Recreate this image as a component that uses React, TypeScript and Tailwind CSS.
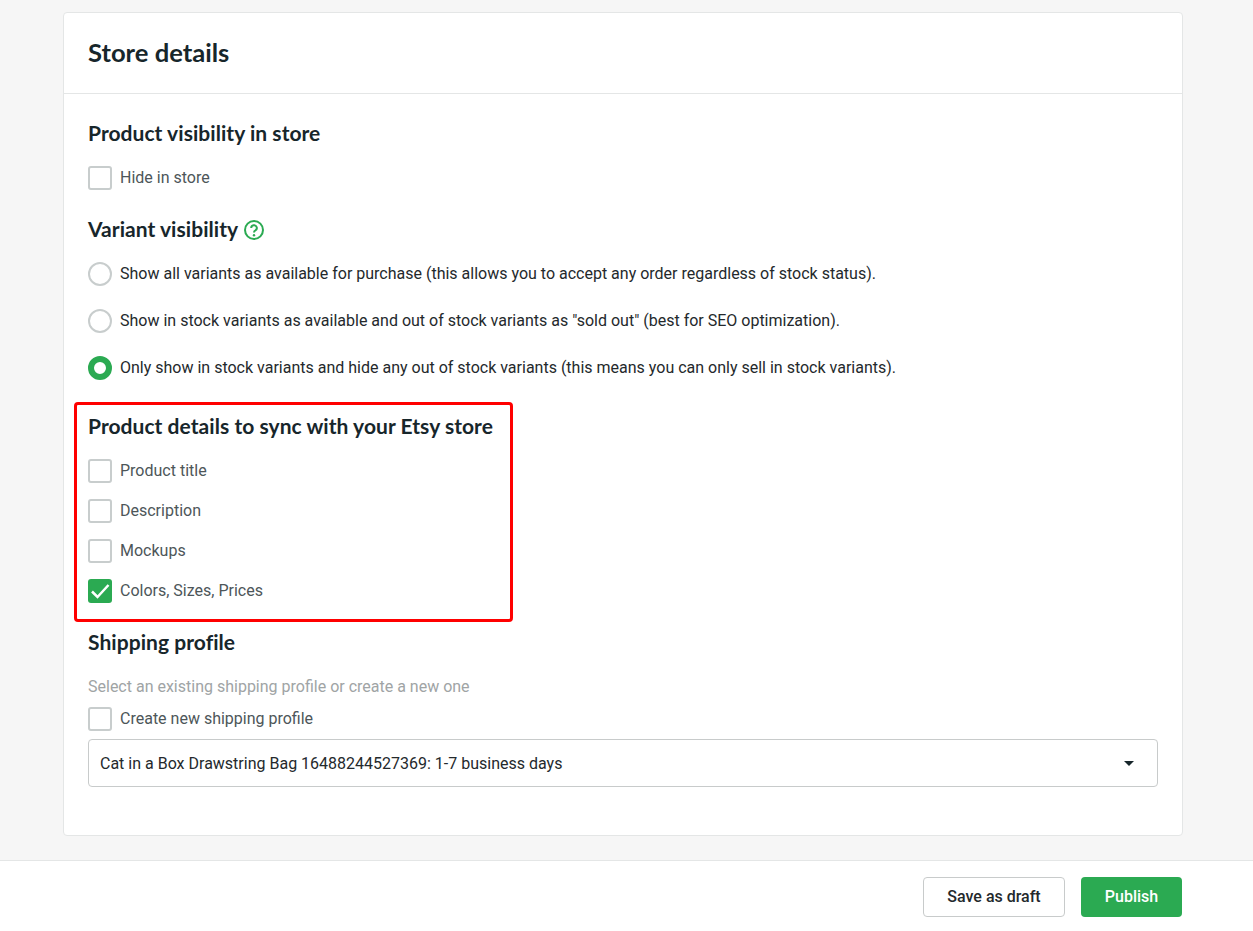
import { ReactNode } from "react";

const headingFont = "font-['Lato',sans-serif] font-bold text-[#17262b]";

function Checkbox({ label, checked }: { label: string; checked?: boolean }) {
  return (
    <label className="flex h-6 items-center gap-2">
      {checked ? (
        <span className="flex h-6 w-6 items-center justify-center rounded-[3px] bg-[#2baa52]">
          <svg width="24" height="24" viewBox="0 0 24 24" fill="none">
            <path d="M4 12.5 L9.5 18 L20.5 6" stroke="#fff" strokeWidth="2.5" />
          </svg>
        </span>
      ) : (
        <span className="h-6 w-6 rounded-[3px] border-2 border-[#c8cdcd] bg-white" />
      )}
      <span className="text-base text-[#4d5659]">{label}</span>
    </label>
  );
}

function Radio({ label, checked }: { label: string; checked?: boolean }) {
  return (
    <label className="flex h-6 items-center gap-2">
      {checked ? (
        <span className="h-6 w-6 rounded-full border-[6px] border-[#2baa52] bg-white" />
      ) : (
        <span className="h-6 w-6 rounded-full border-2 border-[#c8cdcd] bg-white" />
      )}
      <span className="text-base text-[#24292c]">{label}</span>
    </label>
  );
}

function SectionTitle({ children }: { children: ReactNode }) {
  return <h3 className={`${headingFont} text-[21px] leading-6 tracking-[0.05px]`}>{children}</h3>;
}

export default function App() {
  return (
    <div className="flex h-[931px] flex-col overflow-hidden bg-[#f6f6f6] font-['Roboto',sans-serif]">
      <div className="flex-1 px-[63px] pt-3">
        <div className="h-[824px] w-[1120px] rounded border border-[#e4e6e6] bg-white">
          <div className="flex h-[81px] items-center border-b border-[#e4e6e6] px-6 pb-[2px]">
            <h2 className={`${headingFont} text-[25.6px]`}>Store details</h2>
          </div>
          <div className="px-6 pt-[27px]">
            <SectionTitle>Product visibility in store</SectionTitle>
            <div className="mt-[21px]">
              <Checkbox label="Hide in store" />
            </div>
            <div className="mt-[27px] flex items-center gap-1.5">
              <SectionTitle>Variant visibility</SectionTitle>
              <svg className="mt-px" width="20" height="20" viewBox="0 0 20 20" fill="none">
                <circle cx="10" cy="10" r="9" stroke="#2baa52" strokeWidth="2" />
                <path d="M7.2 8a2.8 2.8 0 1 1 4.2 2.4c-1 .5-1.4 1-1.4 2.1" stroke="#2baa52" strokeWidth="2" />
                <circle cx="10" cy="15.2" r="1.2" fill="#2baa52" />
              </svg>
            </div>
            <div className="mt-[21px] flex flex-col gap-[23px]">
              <Radio label="Show all variants as available for purchase (this allows you to accept any order regardless of stock status)." />
              <Radio label={'Show in stock variants as available and out of stock variants as "sold out" (best for SEO optimization).'} />
              <Radio checked label="Only show in stock variants and hide any out of stock variants (this means you can only sell in stock variants)." />
            </div>
            <div className="relative mt-[34px]">
              <SectionTitle>Product details to sync with your Etsy store</SectionTitle>
              <div className="mt-[21px] flex flex-col gap-4">
                <Checkbox label="Product title" />
                <Checkbox label="Description" />
                <Checkbox label="Mockups" />
                <Checkbox checked label="Colors, Sizes, Prices" />
              </div>
              <div className="absolute -left-[14px] -top-[12px] h-[220px] w-[439px] rounded-sm border-[3px] border-[#ff0000]" />
            </div>
            <div className="mt-[27px]">
              <SectionTitle>Shipping profile</SectionTitle>
            </div>
            <p className="mt-[21px] text-base leading-6 text-[#a0a4a5]">Select an existing shipping profile or create a new one</p>
            <div className="mt-[8px]">
              <Checkbox label="Create new shipping profile" />
            </div>
            <div className="mt-2 flex h-12 items-center justify-between rounded border border-[#c8cbcb] bg-white pl-[11px] pr-[23px]">
              <span className="pt-[2px] text-base text-[#24292c]">Cat in a Box Drawstring Bag 16488244527369: 1-7 business days</span>
              <span className="h-0 w-0 border-x-[5px] border-t-[5px] border-x-transparent border-t-[#17262b]" />
            </div>
          </div>
        </div>
      </div>
      <div className="flex h-[71px] items-start justify-end gap-4 border-t border-[#e4e6e6] bg-white pr-[71px] pt-4">
        <button className="h-10 w-[142px] rounded border border-[#c8cbcb] bg-white text-base font-medium text-[#24292c]">Save as draft</button>
        <button className="h-10 w-[101px] rounded bg-[#2baa52] text-base font-medium text-white">Publish</button>
      </div>
    </div>
  );
}
